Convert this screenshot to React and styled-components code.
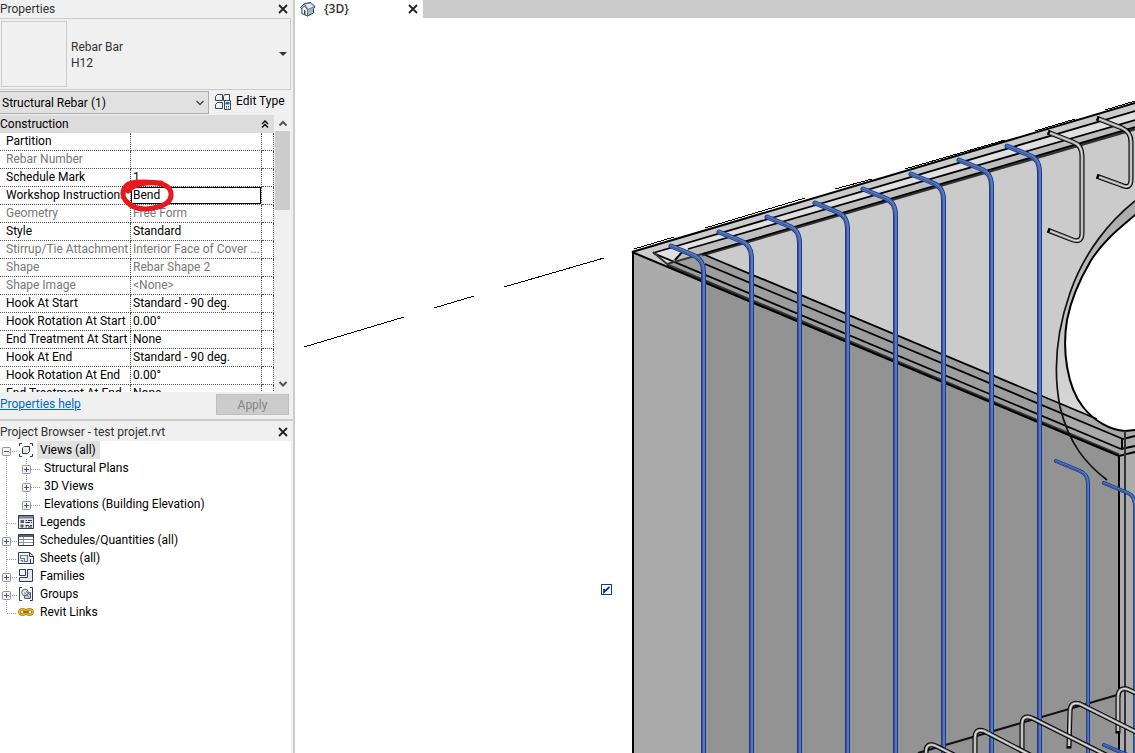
import React from "react";
import styled, { createGlobalStyle } from "styled-components";

const Global = createGlobalStyle`
  *, *::before, *::after { box-sizing: border-box; }
  html, body, #root { height: 100%; }
  body {
    margin: 0;
    overflow: hidden;
    background: #fff;
    color: #000;
    font: 12px/18px Roboto, "Open Sans", sans-serif;
  }
  button, input, select { font: inherit; color: inherit; }
`;

const Shell = styled.div`
  display: flex;
  min-height: 100vh;
`;

const Sidebar = styled.aside`
  display: flex;
  flex-direction: column;
  flex: 0 0 295px;
  border-right: 2px solid #cbcbcb;
  background: #f0f0f0;
`;

const Panel = styled.section`
  display: flex;
  flex-direction: column;
  flex: ${(p) => (p.$fill ? "1 0 auto" : "0 0 auto")};
  border-bottom: ${(p) => (p.$fill ? "0" : "2px solid #cbcbcb")};
`;

const PanelHeader = styled.header`
  display: flex;
  justify-content: space-between;
  align-items: center;
  height: ${(p) => (p.$tall ? 20 : 18)}px;
  padding: ${(p) => (p.$tall ? 2 : 0)}px 3px 0 0;
  color: #333;
`;

const PanelTitle = styled.h2`
  margin: 0;
  font: inherit;
`;

const IconButton = styled.button`
  display: flex;
  align-items: center;
  justify-content: center;
  width: 14px;
  height: 16px;
  padding: 0;
  border: 0;
  background: transparent;
`;

const TypeSelector = styled.div`
  display: flex;
  align-items: center;
  gap: 4px;
  height: 72px;
  margin-right: 2px;
  padding: 2px 0 2px 1px;
  border: 1px solid #cbcbcb;
  border-left: 0;
`;

const Thumbnail = styled.div`
  width: 66px;
  height: 66px;
  border: 1px solid #cbcbcb;
`;

const TypeName = styled.div`
  flex: 1;
  padding-top: 2px;
  line-height: 16px;
  color: #333;
`;

const FilterRow = styled.div`
  display: flex;
  align-items: flex-start;
  gap: 6px;
  height: 24px;
  margin-top: 1px;
`;

const SelectWrap = styled.div`
  display: grid;
  align-items: center;
  width: 209px;
  height: 23px;
  svg { grid-area: 1 / 1; justify-self: end; margin-right: 4px; pointer-events: none; }
`;

const Select = styled.select`
  grid-area: 1 / 1;
  width: 100%;
  height: 100%;
  padding: 0 20px 0 2px;
  border: 1px solid #adadad;
  border-left: 0;
  border-radius: 0;
  background: #e1e1e1;
  appearance: none;
`;

const EditType = styled.button`
  display: flex;
  align-items: center;
  gap: 4px;
  height: 20px;
  padding: 0;
  border: 0;
  background: transparent;
`;

const GridArea = styled.div`
  display: flex;
  height: 277px;
  margin-right: 2px;
  overflow: hidden;
`;

const GridBody = styled.div`
  width: 274px;
  background: #fff;
`;

const GroupHeader = styled.div`
  display: flex;
  justify-content: space-between;
  align-items: center;
  height: 18px;
  padding-right: 2px;
  background: #dcdcdc;
`;

const PropertyTable = styled.table`
  width: 100%;
  table-layout: fixed;
  border-collapse: separate;
  border-spacing: 0;
`;

const NameCell = styled.th`
  width: 131px;
  height: 18px;
  padding: 0 0 0 6px;
  border-right: 1px dotted #555;
  border-bottom: 1px dotted #555;
  color: ${(p) => (p.$muted ? "#787878" : "#000")};
  font-weight: 400;
  line-height: 17px;
  text-align: left;
  vertical-align: top;
  white-space: nowrap;
  overflow: hidden;
`;

const ValueCell = styled(NameCell).attrs({ as: "td" })`
  width: 131px;
  padding-left: ${(p) => (p.$editing ? 0 : 2)}px;
`;

const TailCell = styled(NameCell).attrs({ as: "td" })`
  width: 12px;
  padding: 0;
`;

const ValueInput = styled.input`
  display: block;
  width: 100%;
  height: 17px;
  padding: 0 1px;
  border: 1px solid #000;
  outline: 0;
  background: #fff;
`;

const Scrollbar = styled.div`
  display: flex;
  flex-direction: column;
  align-items: center;
  flex: 1;
`;

const ScrollThumb = styled.div`
  width: 15px;
  height: 79px;
  margin-bottom: auto;
  background: #cdcdcd;
`;

const PanelFooter = styled.footer`
  display: flex;
  justify-content: space-between;
  height: 27px;
  padding: 2px 4px 0 0;
`;

const HelpLink = styled.a`
  line-height: 20px;
  color: #0066cc;
`;

const ApplyButton = styled.button`
  width: 73px;
  height: 21px;
  padding: 0;
  border: 1px solid #bfbfbf;
  background: #cccccc;
  color: #838383;
`;

const Tree = styled.ul`
  flex: 1;
  margin: 0 2px 0 0;
  padding: 0;
  list-style: none;
  background: #fff;
`;

const SubTree = styled.ul`
  margin: 0;
  padding: 0;
  list-style: none;
`;

const TreeRow = styled.div`
  display: flex;
  align-items: center;
  height: 18px;
`;

const TreeLabel = styled.span`
  padding: 0 4px 0 3px;
  margin-left: ${(p) => (p.$nested ? 0 : 1)}px;
  background: ${(p) => (p.$selected ? "#e1e1e1" : "transparent")};
`;

const Workspace = styled.main`
  display: flex;
  flex-direction: column;
  flex: 1;
  min-width: 0;
`;

const TabStrip = styled.nav`
  display: flex;
  height: 18px;
  background: #cbcbcb;
`;

const Tab = styled.div`
  display: flex;
  align-items: center;
  gap: 8px;
  width: 128px;
  padding: 0 3px 0 5px;
  background: #fff;
  color: #333;
  font-family: "Open Sans", sans-serif;
  font-weight: 600;
`;

const TabName = styled.span`
  flex: 1;
`;

const Canvas = styled.div`
  position: relative;
  flex: 1;
  overflow: hidden;
`;

const ModelSvg = styled.svg`
  position: absolute;
  inset: 0;
  width: 100%;
  height: 100%;
`;

const CoverToggle = styled.input`
  position: absolute;
  left: 306px;
  top: 566px;
  width: 11px;
  height: 11px;
  margin: 0;
  border: 1px solid #0039b5;
  background: #fff;
  appearance: none;
  &:checked {
    background: #fff url("data:image/svg+xml,%3Csvg xmlns='http://www.w3.org/2000/svg' viewBox='0 0 9 9'%3E%3Cpath d='M2 4V7L7.500 2' fill='none' stroke='%230039b5' stroke-width='1.8'/%3E%3C/svg%3E");
  }
`;

const Markup = styled.svg`
  position: absolute;
  left: 118px;
  top: 176px;
  width: 60px;
  height: 40px;
  pointer-events: none;
`;

const CloseIcon = () => (
  <svg width="10" height="10" viewBox="0 0 10 10">
    <path d="M1 1 9 9M9 1 1 9" stroke="#222" strokeWidth="1.8" />
  </svg>
);

const Chevron = ({ up, color = "#444", width = 10, weight = 1.3 }) => (
  <svg width={width} height="14" viewBox="0 0 10 14">
    <path d={up ? "M1.500 9.500 5 6 8.500 9.500" : "M1.500 5 5 8.500 8.500 5"} fill="none" stroke={color} strokeWidth={weight} />
  </svg>
);

const EditTypeIcon = () => (
  <svg width="17" height="17" viewBox="0 0 17 17">
    <g fill="#eef1f6" stroke="#3d4657">
      <path d="M2.500 1.500H7.500V7.500H.5V3.500ZM9.500 1.500H14.500V7.500H8.500V3.500ZM2.500 9.500H7.500V15.500H.5V11.500Z" />
      <path d="M9.500 7.500H15.500V16.500H9.500Z" fill="#fff" />
    </g>
    <path d="M10.500 9H14.500V11.500H10.500Z" fill="#1f62b5" />
    <path d="M11 13.500H14.500M11 15H14.500" stroke="#3d4657" strokeDasharray="1 1" />
  </svg>
);

const HouseIcon = () => (
  <svg width="16" height="15" viewBox="0 0 16 15">
    <path d="M.5 5.500 4.500 1.500 10.500 .5 15 4.500 13.500 6.500V11L7.500 14 2 11.500V7Z" fill="#a9b5c4" stroke="#3a4453" />
    <path d="M2 6.500 4.500 4 7.500 8V14L2 11.500Z" fill="#f3f6fa" stroke="#3a4453" strokeWidth=".7" />
    <path d="M4 8 5.500 8.500V13L4 12.300Z" fill="#3a4453" />
    <path d="M4.500 2 10.500 1 14.500 4.500 8 7.500Z" fill="#e3e8ef" stroke="#596575" strokeWidth=".8" />
  </svg>
);

const nodeIcons = {
  views: (
    <>
      <path d="M4 1.500H1.500V4M12 1.500H14.500V4M4 14.500H1.500V12M12 14.500H14.500V12" fill="none" stroke="#333b48" />
      <path d="M4.500 6 6.500 4.500H11.500V9.500L9.500 11.500H4.500Z" fill="#dfe4ea" stroke="#333b48" strokeLinejoin="round" />
      <path d="M5 6H9.500V11" fill="none" stroke="#fff" />
    </>
  ),
  legends: (
    <>
      <path d="M.5 1.500H15.500V14.500H.5Z" fill="#e9ebee" stroke="#333b48" />
      <path d="M1 2H15V4.500H1Z" fill="#7b8490" />
      <path d="M2.500 6H6V9H2.500Z" fill="#59616d" />
      <circle cx="4" cy="12" r="1.800" fill="#59616d" />
      <path d="M7.500 6.500H9M10 6.500H14M7.500 8.500H12M13 8.500H14M7.500 11.500H11M12 11.500H14M7.500 13H9M10 13H14" stroke="#333b48" />
    </>
  ),
  schedules: (
    <>
      <path d="M.5 2.500H15.500V13.500H.5Z" fill="#fff" stroke="#333b48" />
      <path d="M1 3H15V5H1Z" fill="#59616d" />
      <path d="M1 7.500H15M1 10.500H15M5.500 5V13" stroke="#8b94a1" />
    </>
  ),
  sheets: (
    <>
      <path d="M.5 2.500H11.500L15.500 6V13.500H.5Z" fill="#eef0f3" stroke="#333b48" />
      <path d="M11.500 2.500V6.500H15.500M12.500 9V14" fill="none" stroke="#333b48" />
      <path d="M2.500 5.500H9.500V11.500H6.500V8.500H2.500ZM2.500 10.500H4.500V12" fill="none" stroke="#6e7e91" strokeWidth="1.200" />
    </>
  ),
  families: (
    <>
      <path d="M1.500 1.500H7.500V7.500H1.500Z" fill="#f4f5f7" stroke="#333b48" />
      <path d="M9.500 1.500H14.500V13.500H1.500V9.500H9.500Z" fill="#e6e9ee" stroke="#333b48" />
    </>
  ),
  groups: (
    <>
      <path d="M4 1.500H1.500V14.500H4M12 1.500H14.500V14.500H12" fill="none" stroke="#333b48" />
      <path d="M6.500 6.500H12.500V12.500H6.500Z" fill="#c8d0d9" stroke="#59616d" />
      <circle cx="7" cy="6.500" r="3.300" fill="#dce2e8" fillOpacity=".8" stroke="#59616d" />
      <path d="M6.500 6.500 11.500 12M8 5 12 9" stroke="#59616d" strokeWidth=".7" />
    </>
  ),
  links: (
    <g fill="none">
      <rect x="1.500" y="5.500" width="6" height="5" rx="2.500" stroke="#8a5a00" strokeWidth="2.600" />
      <rect x="8.500" y="5.500" width="6" height="5" rx="2.500" stroke="#8a5a00" strokeWidth="2.600" />
      <rect x="1.500" y="5.500" width="6" height="5" rx="2.500" stroke="#f3b91d" strokeWidth="1.400" />
      <rect x="8.500" y="5.500" width="6" height="5" rx="2.500" stroke="#f3b91d" strokeWidth="1.400" />
      <path d="M5 8H11" stroke="#8a5a00" strokeWidth="1.500" />
    </g>
  ),
};

const TreeGuide = ({ nested, expander, last, icon, open }) => (
  <svg width={nested ? 41 : 36} height="18" viewBox={nested ? "0 0 41 18" : "0 0 36 18"}>
    <g stroke="#999" strokeDasharray="1 1" fill="none">
      <path d={`M6.500 ${open ? 10 : 0}V${last && !nested ? 10 : 18}`} />
      {nested ? <path d={`M26.500 0V${last ? 10 : 18}M31 10.500H41`} /> : <path d={`M${expander ? 12 : 7} 10.500H17`} />}
    </g>
    {expander && (
      <g transform={`translate(${nested ? 22 : 2} 6)`}>
        <rect x=".5" y=".5" width="8" height="8" rx="1" fill="#f5f5f5" stroke="#919191" />
        <path d={open ? "M2 4.500H7" : "M2 4.500H7M4.500 2V7"} stroke="#3b5795" />
      </g>
    )}
    {icon && <g transform="translate(18 1)">{nodeIcons[icon]}</g>}
  </svg>
);

const properties = [
  ["Partition", ""],
  ["Rebar Number", "", true],
  ["Schedule Mark", "1"],
  ["Workshop Instructions", "Bend"],
  ["Geometry", "Free Form", true],
  ["Style", "Standard"],
  ["Stirrup/Tie Attachment", "Interior Face of Cover ...", true],
  ["Shape", "Rebar Shape 2", true],
  ["Shape Image", "<None>", true],
  ["Hook At Start", "Standard - 90 deg."],
  ["Hook Rotation At Start", "0.00°"],
  ["End Treatment At Start", "None"],
  ["Hook At End", "Standard - 90 deg."],
  ["Hook Rotation At End", "0.00°"],
  ["End Treatment At End", "None"],
];

const browserNodes = [
  { label: "Views (all)", icon: "views", expander: true, open: true, selected: true, children: ["Structural Plans", "3D Views", "Elevations (Building Elevation)"] },
  { label: "Legends", icon: "legends" },
  { label: "Schedules/Quantities (all)", icon: "schedules", expander: true },
  { label: "Sheets (all)", icon: "sheets" },
  { label: "Families", icon: "families", expander: true },
  { label: "Groups", icon: "groups", expander: true },
  { label: "Revit Links", icon: "links", last: true },
];

const longBars = [
  [671, 246], [719, 232], [767, 217], [815, 203], [863, 189], [911, 174], [959, 160], [1007, 146],
];

const SelectedBar = ({ d, width = 5 }) => (
  <g fill="none" strokeLinecap="round">
    <path d={d} stroke="#0a3cb4" strokeWidth={width} />
    <path d={d} stroke="#6079b0" strokeWidth={width - 2} />
    <path d={d} stroke="#45536f" strokeWidth="1" transform="translate(-1 0)" />
  </g>
);

const SteelBar = ({ d }) => (
  <g fill="none">
    <path d={d} stroke="#000" strokeWidth="5" strokeLinecap="square" />
    <path d={d} stroke="#8a8a8a" strokeWidth="3" />
    <path d={d} stroke="#e2e2e2" strokeWidth="1.300" />
  </g>
);

const stirrups = [
  "M1050 133 1073 142Q1082 145 1082 156V233Q1082 243 1073 240L1050 231",
  "M1099 119 1122 128Q1131 132 1131 142V179Q1131 190 1121 185L1099 177",
  "M1118 731V698Q1118 687 1127 689L1138 694",
  "M1069 746 1070 712Q1070 701 1080 704L1138 733",
  "M1022 760V725Q1022 714 1032 718L1106 755",
  "M975 760V738Q975 728 984 731L1032 756",
  "M926 760V752Q926 742 936 746L956 756",
];

const voidEdge = "C1128 221 1119 228 1110 237C1101 246 1096 252 1090 262C1079 281 1071 299 1067 320C1062 350 1067 387 1083 407C1094 421 1110 430 1125 431L1145 429";

const Model = () => (
  <ModelSvg viewBox="295 18 840 735" preserveAspectRatio="xMinYMin slice" role="img" aria-label="3D view of the rebar model">
    <defs>
      <linearGradient id="voidDepth" x2="0" y2="1">
        <stop offset="0" stopColor="#aaa" />
        <stop offset=".45" stopColor="#c0c0c0" />
        <stop offset="1" stopColor="#dadada" />
      </linearGradient>
    </defs>
    <path d="M304 347 404 317M434 308 474 296M504 287 604 258" stroke="#000" shapeRendering="crispEdges" />
    <path d="M632 252 1135 103V753H632Z" fill="#cbcbcb" />
    <path d="M653 252 1135 111V120L688 249 667 264Z" fill="#e0e0e0" />
    <path d="M688 249 1135 120V128L702 254 667 264Z" fill="#bebebe" />
    <path d="M632 252 1119 456V753H632Z" fill="#939393" />
    <path d="M632 252 704 282V753H632Z" fill="#ababab" />
    <path d="M667 264 702 254 1097 419 1125 431 1119 456Z" fill="#9d9d9d" />
    <path d="M1062 405 1097 419 1125 431 1119 456 1070 436Z" fill="#a9a9a9" />
    <path d="M1119 456 1125 431 1135 429V753H1119Z" fill="#acacac" />
    <path d="M1135 201C1110 220 1084 255 1070 293C1055 335 1052 380 1060 404L1097 419V320L1135 215Z" fill="url(#voidDepth)" />
    <path d={`M1145 210L1135 215${voidEdge}Z`} fill="#fff" stroke="#000" strokeWidth="2" />
    <g fill="none" stroke="#000" strokeWidth="2">
      <path d="M633 252V753" />
      <path d="M632 252 1135 103" />
      <path d="M634 249 674 237M705 228 805 198M835 189 872 179M905 169 1005 140M1035 131 1075 119M1105 110 1135 101" strokeWidth="1" shapeRendering="crispEdges" />
      <path d="M702 255 1135 129" stroke="#333" strokeWidth="3" />
      <path d="M653 253 1135 111M688 249 1135 120M702 254 1135 127" strokeWidth="1.800" />
      <path d="M705 255 1097 419M705 264 1123 439M653 253 1121 449" strokeWidth="1.800" />
      <path d="M667 265 1119 455" stroke="#333" strokeWidth="3" />
      <path d="M632 252 1119 456 1135 452" />
      <path d="M653 252 667 264 702 254" stroke="#333" />
      <path d="M675 260 684 250M1123 439 1135 436M1121 449 1135 446M1122 439V449M1119 456V753" />
      <path d="M1125 431V753" stroke="#333" />
      <path d="M918 753 1117 695" stroke="#111" />
    </g>
    <path d="M1135 201C1110 221 1084 252 1070 293C1056 333 1053 371 1060 407C1069 444 1086 464 1107 480" fill="none" stroke="#111" strokeWidth="1.700" />
    {longBars.map(([x, y]) => (
      <SelectedBar key={x} d={`M${x} ${y} ${x + 22} ${y + 9}Q${x + 32.5} ${y + 13} ${x + 32.5} ${y + 26}V760`} />
    ))}
    <SelectedBar d="M1056 461 1080 471Q1088 474 1088 484V760" width={4} />
    <SelectedBar d="M1104 483 1128 493Q1135 496 1135 507V760" width={4} />
    {stirrups.map((d) => <SteelBar key={d} d={d} />)}
    <SelectedBar d="M1104 745 1130 756" width={4} />
  </ModelSvg>
);

export default function App() {
  return (
    <>
      <Global />
      <Shell>
        <Sidebar>
          <Panel>
            <PanelHeader>
              <PanelTitle>Properties</PanelTitle>
              <IconButton aria-label="Close Properties"><CloseIcon /></IconButton>
            </PanelHeader>
            <TypeSelector>
              <Thumbnail />
              <TypeName>Rebar Bar<br />H12</TypeName>
              <IconButton aria-label="Choose type">
                <svg width="8" height="4" viewBox="0 0 8 4"><path d="M0 0H8L4 4Z" fill="#333" /></svg>
              </IconButton>
            </TypeSelector>
            <FilterRow>
              <SelectWrap>
                <Select aria-label="Element filter"><option>Structural Rebar (1)</option></Select>
                <Chevron />
              </SelectWrap>
              <EditType><EditTypeIcon />Edit Type</EditType>
            </FilterRow>
            <GridArea>
              <GridBody>
                <GroupHeader>
                  Construction
                  <IconButton aria-label="Collapse Construction">
                    <svg width="8" height="8" viewBox="0 0 8 8"><path d="M1 4 4 1 7 4M1 7.500 4 4.500 7 7.500" fill="none" stroke="#000" strokeWidth="1.400" /></svg>
                  </IconButton>
                </GroupHeader>
                <PropertyTable>
                  <tbody>
                    {properties.map(([name, value, muted]) => {
                      const editing = value === "Bend";
                      return (
                        <tr key={name}>
                          <NameCell scope="row" $muted={muted}>{name}</NameCell>
                          <ValueCell $muted={muted} $editing={editing}>
                            {editing ? <ValueInput aria-label={name} defaultValue={value} /> : value}
                          </ValueCell>
                          <TailCell />
                        </tr>
                      );
                    })}
                  </tbody>
                </PropertyTable>
              </GridBody>
              <Scrollbar>
                <IconButton aria-label="Scroll up"><Chevron up weight={2} color="#555" /></IconButton>
                <ScrollThumb />
                <IconButton aria-label="Scroll down"><Chevron weight={2} color="#555" /></IconButton>
              </Scrollbar>
            </GridArea>
            <PanelFooter>
              <HelpLink href="#help">Properties help</HelpLink>
              <ApplyButton disabled>Apply</ApplyButton>
            </PanelFooter>
          </Panel>
          <Panel $fill>
            <PanelHeader $tall>
              <PanelTitle>Project Browser - test projet.rvt</PanelTitle>
              <IconButton aria-label="Close Project Browser"><CloseIcon /></IconButton>
            </PanelHeader>
            <Tree>
              {browserNodes.map(({ label, selected, children, ...guide }) => (
                <li key={label}>
                  <TreeRow><TreeGuide {...guide} /><TreeLabel $selected={selected}>{label}</TreeLabel></TreeRow>
                  {children && (
                    <SubTree>
                      {children.map((child, i) => (
                        <li key={child}>
                          <TreeRow><TreeGuide nested expander last={i === children.length - 1} /><TreeLabel $nested>{child}</TreeLabel></TreeRow>
                        </li>
                      ))}
                    </SubTree>
                  )}
                </li>
              ))}
            </Tree>
          </Panel>
        </Sidebar>
        <Workspace>
          <TabStrip>
            <Tab>
              <HouseIcon />
              <TabName>{"{3D}"}</TabName>
              <IconButton aria-label="Close view"><CloseIcon /></IconButton>
            </Tab>
          </TabStrip>
          <Canvas>
            <Model />
            <CoverToggle type="checkbox" defaultChecked aria-label="Include end bar" />
          </Canvas>
        </Workspace>
        <Markup viewBox="118 176 60 40" aria-hidden="true">
          <path d="M161 183C150 182 140 181 131 183C122 186 121 195 126 201C133 209 143 210 153 208C165 206 172 201 171 193C170 185 160 182 147 183C137 184 131 187 128 191" fill="none" stroke="#e8191c" strokeWidth="5" strokeLinecap="round" />
        </Markup>
      </Shell>
    </>
  );
}
